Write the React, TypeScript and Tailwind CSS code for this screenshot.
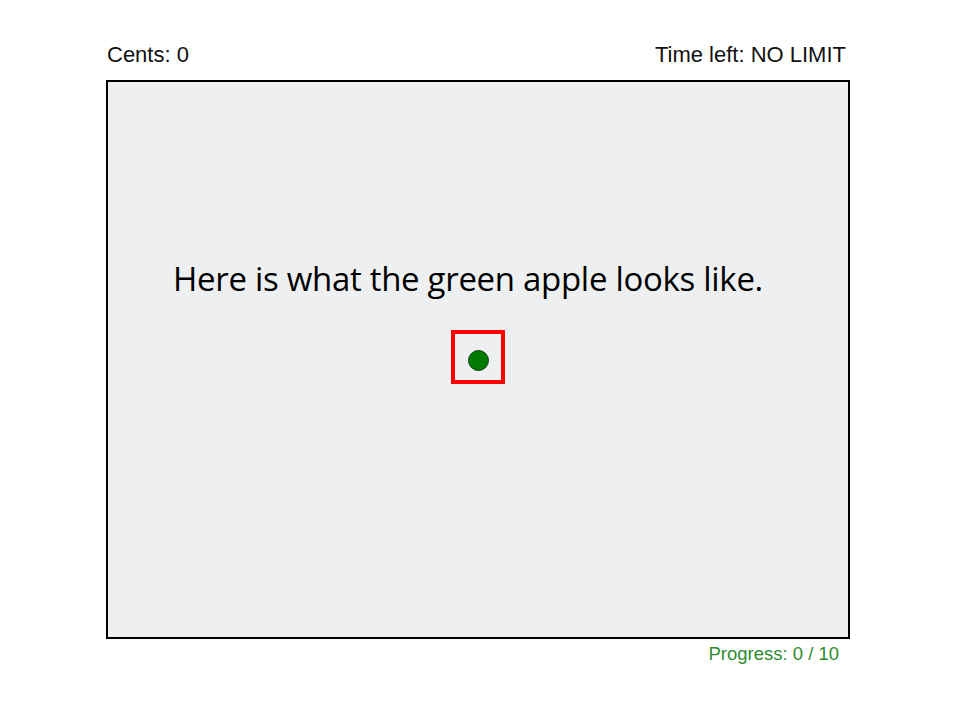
export default function App() {
  return (
    <div className="w-[960px] h-[720px] bg-white font-['Liberation_Sans',Arial,sans-serif]">
      <div className="ml-[106px] w-[744px] pt-[40px]">
        <div className="flex items-end justify-between h-[26px] text-[22px] leading-none text-[#111] px-px">
          <span>Cents: 0</span>
          <span className="pr-[3px]">Time left: NO LIMIT</span>
        </div>
        <div className="mt-[14px] h-[559px] border-2 border-black bg-[#eeeff1] flex flex-col items-center">
          <p className="mt-[180px] mr-[20px] text-[33px] leading-none text-black font-['Open_Sans',sans-serif] tracking-[-0.3px]">
            Here is what the green apple looks like.
          </p>
          <div className="mt-[35px] w-[54px] h-[54px] border-4 border-[#ff0000] flex items-center justify-center">
            <div className="mt-[6px] w-[21px] h-[21px] rounded-full bg-[#007a00] border border-[#0b3b0b]" />
          </div>
        </div>
        <div className="flex justify-end pr-[11px] mt-[1px] text-[18.5px] text-[#2e8b2e]">
          Progress: 0 / 10
        </div>
      </div>
    </div>
  );
}
